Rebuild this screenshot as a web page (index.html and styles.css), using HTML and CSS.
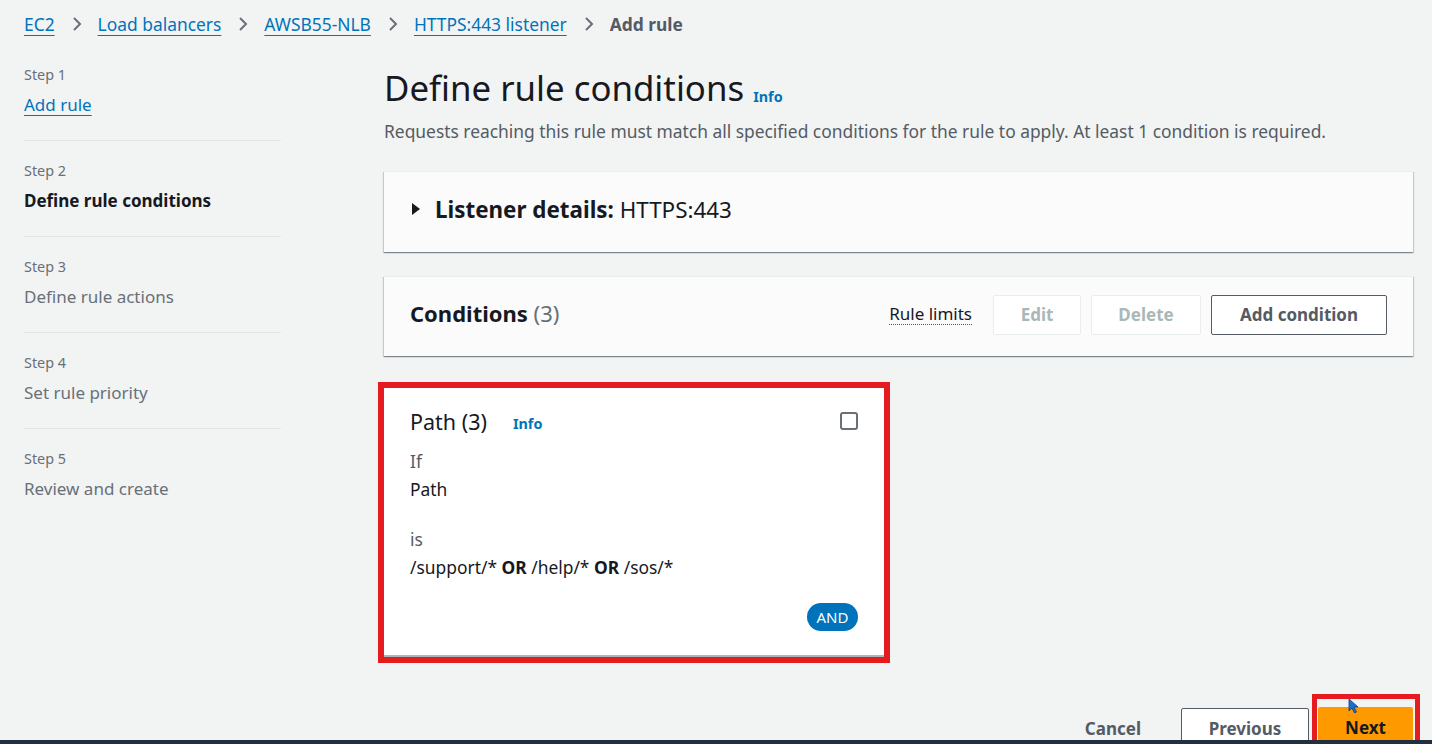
FILE: index.html
```html
<!DOCTYPE html>
<html lang="en">
<head>
<meta charset="utf-8">
<title>Add rule - Define rule conditions</title>
<link rel="stylesheet" href="styles.css">
</head>
<body>
<nav class="breadcrumbs">
  <a class="crumb" href="#">EC2</a>
  <span class="chev"><svg width="12" height="16" viewBox="0 0 12 16"><path d="M3 2l6 6-6 6" fill="none" stroke="#687078" stroke-width="2"/></svg></span>
  <a class="crumb" href="#">Load balancers</a>
  <span class="chev"><svg width="12" height="16" viewBox="0 0 12 16"><path d="M3 2l6 6-6 6" fill="none" stroke="#687078" stroke-width="2"/></svg></span>
  <a class="crumb" href="#">AWSB55-NLB</a>
  <span class="chev"><svg width="12" height="16" viewBox="0 0 12 16"><path d="M3 2l6 6-6 6" fill="none" stroke="#687078" stroke-width="2"/></svg></span>
  <a class="crumb" href="#">HTTPS:443 listener</a>
  <span class="chev"><svg width="12" height="16" viewBox="0 0 12 16"><path d="M3 2l6 6-6 6" fill="none" stroke="#687078" stroke-width="2"/></svg></span>
  <span class="crumb-current">Add rule</span>
</nav>

<div class="layout">
  <aside class="steps">
    <div class="step">
      <div class="step-num">Step 1</div>
      <a class="step-link" href="#">Add rule</a>
    </div>
    <div class="step">
      <div class="step-num">Step 2</div>
      <div class="step-title active">Define rule conditions</div>
    </div>
    <div class="step">
      <div class="step-num">Step 3</div>
      <div class="step-title">Define rule actions</div>
    </div>
    <div class="step">
      <div class="step-num">Step 4</div>
      <div class="step-title">Set rule priority</div>
    </div>
    <div class="step last">
      <div class="step-num">Step 5</div>
      <div class="step-title">Review and create</div>
    </div>
  </aside>

  <main class="main">
    <header class="page-head">
      <h1 class="page-title">Define rule conditions <a class="info" href="#">Info</a></h1>
      <p class="page-desc">Requests reaching this rule must match all specified conditions for the rule to apply. At least 1 condition is required.</p>
    </header>

    <section class="card expander">
      <span class="caret"><svg width="10" height="12" viewBox="0 0 10 12"><path d="M1 0l8 6-8 6z" fill="#16191f"/></svg></span>
      <span class="exp-title"><b>Listener details:</b> HTTPS:443</span>
    </section>

    <section class="card cond-head">
      <h2 class="cond-title">Conditions <span class="count">(3)</span></h2>
      <div class="actions">
        <span class="rule-limits">Rule limits</span>
        <button class="btn disabled edit">Edit</button>
        <button class="btn disabled delete">Delete</button>
        <button class="btn normal add">Add condition</button>
      </div>
    </section>

    <section class="path-card">
      <div class="path-head">
        <span class="path-title">Path (3)</span>
        <a class="info path-info" href="#">Info</a>
        <span class="checkbox"></span>
      </div>
      <div class="kv">
        <div class="k">If</div>
        <div class="v">Path</div>
      </div>
      <div class="kv second">
        <div class="k">is</div>
        <div class="v">/support/* <b>OR</b> /help/* <b>OR</b> /sos/*</div>
      </div>
      <div class="and-row"><span class="pill">AND</span></div>
    </section>

    <footer class="footer">
      <button class="btn link">Cancel</button>
      <button class="btn normal prev">Previous</button>
      <span class="highlight"><button class="btn primary">Next</button></span>
    </footer>
  </main>
</div>
<span class="cursor"><svg width="12" height="16" viewBox="0 0 12 16"><path d="M1 1v12l3-3 2.5 5 2-1-2.5-5h4z" fill="#1a6fd0" stroke="#0b3d80" stroke-width="0.8"/></svg></span>
<div class="player-bar"></div>
</body>
</html>
```
FILE: styles.css
```css
* { box-sizing: border-box; }
html, body { margin: 0; padding: 0; }
body {
  background: #f2f3f3;
  font-family: "Noto Sans", "Open Sans", "Liberation Sans", sans-serif;
  color: #16191f;
  width: 1432px;
  height: 744px;
  overflow: hidden;
}
a { color: #0073bb; text-decoration: none; }

.breadcrumbs {
  display: flex;
  align-items: center;
  height: 48px;
  padding-left: 24px;
  font-size: 17.4px;
}
.crumb {
  color: #0073bb;
  text-decoration: underline;
  text-underline-offset: 4px;
  text-decoration-thickness: 1px;
}
.chev { display: inline-flex; margin: 0 15px 0 16px; }
.crumb-current { color: #545b64; font-weight: 700; }

.layout {
  display: flex;
  align-items: flex-start;
}
.steps {
  width: 281px;
  padding-left: 24px;
  flex-shrink: 0;
}
.step {
  border-bottom: 1px solid #e3e6e6;
  padding-top: 19px;
  height: 96px;
}
.step:first-child { padding-top: 16px; height: 93px; }
.step.last { border-bottom: none; }
.step-num {
  font-size: 14.4px;
  color: #687078;
  line-height: 22px;
}
.step-link, .step-title {
  display: inline-block;
  margin-top: 8px;
  font-size: 17px;
  line-height: 22px;
}
.step-link {
  color: #0073bb;
  text-decoration: underline;
  text-underline-offset: 4px;
}
.step-title { color: #687078; }
.step-title.active { color: #16191f; font-weight: 700; }

.main {
  margin-left: 103px;
  width: 1029px;
  display: flex;
  flex-direction: column;
}
.page-head { padding-top: 18px; }
.page-title {
  margin: 0;
  font-size: 34.8px;
  font-weight: 400;
  line-height: 44px;
  color: #16191f;
}
.page-title .info { margin-left: 0; }
.info {
  font-size: 14.4px;
  font-weight: 700;
  vertical-align: -1px;
}
.page-desc {
  margin: 1px 0 0;
  font-size: 17.4px;
  line-height: 22px;
  color: #545b64;
}

.card {
  background: #fbfbfb;
  box-shadow: 0 1px 1px 0 rgba(0,28,36,.3), 1px 1px 1px 0 rgba(0,28,36,.15), -1px 1px 1px 0 rgba(0,28,36,.15);
  border-top: 1px solid #eaeded;
}
.expander {
  margin-top: 29px;
  height: 81px;
  display: flex;
  align-items: center;
  padding-left: 27px;
  padding-bottom: 6px;
}
.caret { display: inline-flex; margin-right: 14px; }
.exp-title { font-size: 22.4px; }
.exp-title b { font-weight: 700; }

.cond-head {
  margin-top: 24px;
  height: 80px;
  display: flex;
  align-items: center;
  justify-content: space-between;
  padding: 0 26px 4px;
}
.cond-title { margin: 0 0 4px; font-size: 22px; font-weight: 700; }
.count { font-weight: 400; color: #687078; }
.actions { display: flex; align-items: center; gap: 10px; }
.rule-limits {
  font-size: 17px;
  color: #16191f;
  border-bottom: 1px dotted #545b64;
  line-height: 20px;
  margin-right: 11px;
}
.btn {
  font-family: inherit;
  font-size: 17px;
  font-weight: 700;
  height: 40px;
  border-radius: 2px;
  background: #fff;
  cursor: pointer;
}
.btn.disabled { border: 1px solid #eaeded; color: #aab7b8; }
.edit { width: 88px; }
.delete { width: 110px; }
.btn.normal { border: 1px solid #545b64; color: #545b64; }
.add { width: 176px; }

.path-card {
  margin-top: 32px;
  width: 500px;
  height: 269px;
  background: #fff;
  border-bottom: 2px solid #aab7b8;
  outline: 6px solid #e41b1f;
  outline-offset: 0;
  padding: 20px 26px 0 26px;
  display: flex;
  flex-direction: column;
}
.path-head { display: flex; align-items: center; height: 26px; }
.path-title { font-size: 21.5px; }
.path-info { margin-left: 26px; margin-top: 5px; }
.checkbox {
  margin-left: auto;
  width: 18px;
  height: 18px;
  border: 2px solid #687078;
  border-radius: 3px;
}
.kv { margin-top: 14px; }
.kv.second { margin-top: 22px; }
.k { font-size: 17.4px; color: #545b64; line-height: 26px; }
.v { font-size: 17.4px; color: #16191f; line-height: 30px; }
.v b { font-weight: 700; }
.and-row { display: flex; justify-content: flex-end; margin-top: 21px; }
.pill {
  background: #0073bb;
  color: #fff;
  font-size: 15px;
  border-radius: 14px;
  width: 51px;
  height: 28px;
  display: flex;
  align-items: center;
  justify-content: center;
}

.footer {
  display: flex;
  justify-content: flex-end;
  align-items: flex-start;
  margin-top: 37px;
  margin-right: -7px;
}
.btn.link {
  border: none;
  background: transparent;
  color: #545b64;
  margin-top: 14px;
  margin-right: 34px;
}
.prev { margin-top: 14px; width: 128px; height: 40px; border-radius: 2px; }
.highlight {
  display: inline-flex;
  border: 5px solid #e41b1f;
  padding: 8px 2px 0 1px;
  margin-left: 3px;
}
.btn.primary {
  border: none;
  background: #ff9900;
  color: #16191f;
  width: 95px;
  height: 40px;
}

.cursor { position: absolute; left: 1348px; top: 697px; }
.player-bar {
  position: fixed;
  left: 0;
  right: 0;
  bottom: 0;
  height: 4px;
  background: #232f3e;
}
```
